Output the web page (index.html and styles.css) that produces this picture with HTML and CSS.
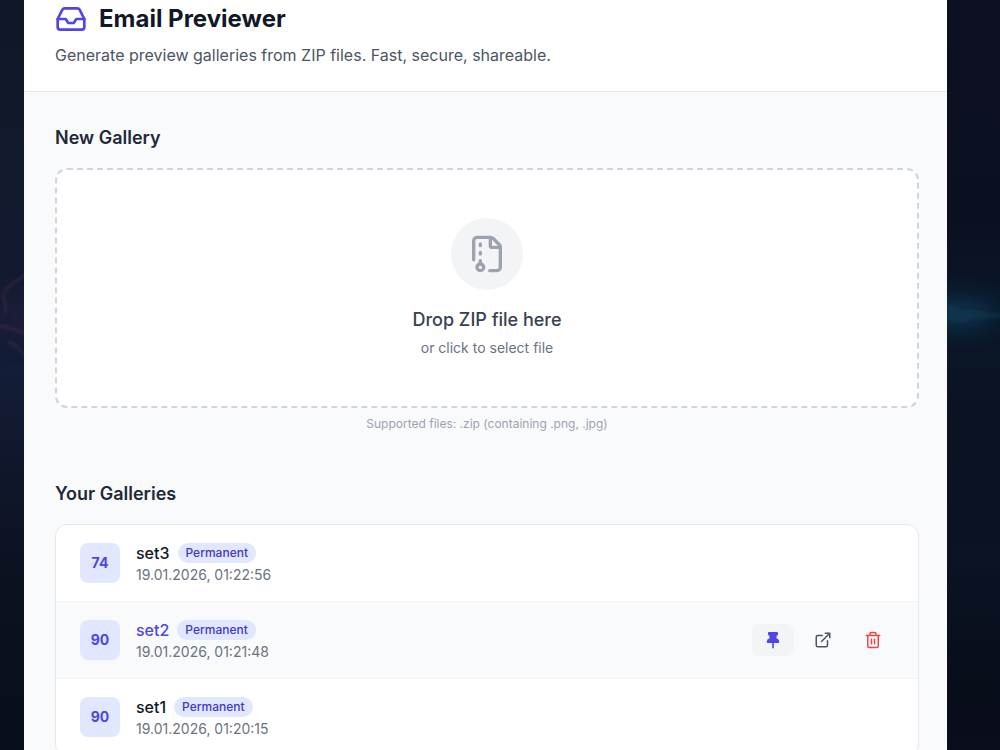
FILE: index.html
```html
<!DOCTYPE html>
<html lang="en">
<head>
<meta charset="utf-8">
<title>Email Previewer</title>
<link rel="stylesheet" href="styles.css">
</head>
<body>
<svg class="backdrop" viewBox="0 0 1000 750" aria-hidden="true">
  <defs>
    <filter id="soft" x="-50%" y="-50%" width="200%" height="200%"><feGaussianBlur stdDeviation="1.5"/></filter>
    <filter id="haze" x="-50%" y="-100%" width="200%" height="300%"><feGaussianBlur stdDeviation="12"/></filter>
  </defs>
  <ellipse cx="14" cy="316" rx="12" ry="26" fill="#3a2444" opacity=".35" filter="url(#haze)"/>
  <g fill="none" stroke="#5b3159" stroke-width="2.5" opacity=".4" filter="url(#soft)">
    <path d="M26 274L12 284Q2 292 3 297Q7 306 5 313M-2 326Q12 327 26 334M8 341Q18 346 26 357"/>
  </g>
  <ellipse cx="955" cy="313" rx="42" ry="16" fill="#0c4361" opacity=".6" filter="url(#haze)"/>
  <path d="M947 303Q960 311 972 310Q985 313 1002 313L1002 318Q980 317 962 323L947 321Z" fill="#12506b" opacity=".25" filter="url(#soft)"/>
</svg>
<div class="panel">
  <header class="header">
    <div class="brand">
      <svg class="brand-icon line" viewBox="0 0 24 24"><path d="M22 12h-6l-2 3h-4l-2-3H2"/><path d="M5.45 5.11 2 12v6a2 2 0 0 0 2 2h16a2 2 0 0 0 2-2v-6l-3.45-6.89A2 2 0 0 0 16.76 4H7.24a2 2 0 0 0-1.79 1.11z"/></svg>
      <h1>Email Previewer</h1>
    </div>
    <p class="tagline">Generate preview galleries from ZIP files. Fast, secure, shareable.</p>
  </header>
  <main class="main">
    <section class="section">
      <h2>New Gallery</h2>
      <div class="dropzone">
        <div class="drop-icon"><svg class="line" viewBox="0 0 24 24"><path d="M13.659 22H18a2 2 0 0 0 2-2V8a2.4 2.4 0 0 0-.706-1.706l-3.588-3.588A2.4 2.4 0 0 0 14 2H6a2 2 0 0 0-2 2v11.5"/><path d="M14 2v5a1 1 0 0 0 1 1h5M8 12v-1M8 18v-2M8 7V6"/><circle cx="8" cy="20" r="2"/></svg></div>
        <p class="drop-title">Drop ZIP file here</p>
        <p class="drop-sub">or click to select file</p>
      </div>
      <p class="hint">Supported files: .zip (containing .png, .jpg)</p>
    </section>
    <section class="section">
      <h2>Your Galleries</h2>
      <ul class="list">
        <li class="item">
          <div class="count">74</div>
          <div><div class="name-row"><span class="name">set3</span><span class="badge">Permanent</span></div><div class="date">19.01.2026, 01:22:56</div></div>
        </li>
        <li class="item active">
          <div class="count">90</div>
          <div><div class="name-row"><span class="name">set2</span><span class="badge">Permanent</span></div><div class="date">19.01.2026, 01:21:48</div></div>
          <div class="actions">
            <button class="action pinned" aria-label="Unpin"><svg viewBox="0 0 18 18"><path d="M4.9 1Q4 1 4 1.9V3.5Q4 4.4 4.9 4.5H5.4V7.2Q2.8 8.1 2.8 10.3V11.2Q2.8 12 3.6 12H8.2V17.3H9.8V12H14.4Q15.2 12 15.2 11.2V10.3Q15.2 8.1 12.6 7.2V4.5H13.1Q14 4.4 14 3.5V1.9Q14 1 13.1 1Z"/></svg></button>
            <button class="action" aria-label="Open"><svg class="line" viewBox="0 0 24 24"><path d="M15 3h6v6M10 14 21 3M18 13v6a2 2 0 0 1-2 2H5a2 2 0 0 1-2-2V8a2 2 0 0 1 2-2h6"/></svg></button>
            <button class="action remove" aria-label="Delete"><svg class="line" viewBox="0 0 24 24"><path d="M3 6h18M19 6v14a2 2 0 0 1-2 2H7a2 2 0 0 1-2-2V6M8 6V4a2 2 0 0 1 2-2h4a2 2 0 0 1 2 2v2M10 11v6M14 11v6"/></svg></button>
          </div>
        </li>
        <li class="item">
          <div class="count">90</div>
          <div><div class="name-row"><span class="name">set1</span><span class="badge">Permanent</span></div><div class="date">19.01.2026, 01:20:15</div></div>
        </li>
      </ul>
    </section>
  </main>
</div>
</body>
</html>
```
FILE: styles.css
```css
* { box-sizing: border-box; margin: 0; padding: 0; }
body {
  height: 750px;
  overflow: hidden;
  font-family: Inter, sans-serif;
  background:
    linear-gradient(#101827, #121a30 35%, #131d37 50%, #10172b 62%, #0b111f 78%, #090e1c) 0 0 / 24px 750px no-repeat,
    linear-gradient(#0c1020, #0b1020 30%, #0b182a 42%, #0b1222 56%, #0b1324 75%, #080e1b 88%, #0a0d1b);
}
.backdrop { position: absolute; inset: 0; width: 1000px; height: 750px; }
.panel { position: relative; width: 923px; height: 750px; margin-left: 24px; overflow: hidden; background: #f9fafc; }
.line { fill: none; stroke: currentColor; stroke-width: 2; stroke-linecap: round; stroke-linejoin: round; }
.header { height: 92px; padding: 3px 31px 0; background: #fff; border-bottom: 1px solid #e5e7eb; }
.brand { display: flex; align-items: center; gap: 12px; }
.brand-icon { width: 32px; height: 32px; color: #4f46e5; }
h1 { font-size: 24px; line-height: 32px; font-weight: 700; color: #111827; }
.tagline { margin-top: 8px; font-size: 16px; line-height: 24px; color: #4b5563; }
.main { padding: 32px 28px 0 31px; }
.section + .section { margin-top: 48px; }
h2 { margin-bottom: 16px; font-size: 18px; line-height: 28px; font-weight: 600; color: #1f2937; }
.dropzone { display: flex; flex-direction: column; align-items: center; padding: 48px; background: #fff; border: 2px dashed #d1d5db; border-radius: 12px; }
.drop-icon { display: flex; padding: 16px; margin-bottom: 16px; border-radius: 50%; background: #f3f4f6; color: #9ca3af; }
.drop-icon svg { width: 40px; height: 40px; }
.drop-title { font-size: 18px; line-height: 28px; font-weight: 500; color: #374151; }
.drop-sub { margin-top: 4px; font-size: 14px; line-height: 20px; color: #6b7280; }
.hint { margin-top: 8px; font-size: 12px; line-height: 16px; text-align: center; color: #9ca3af; }
.list { list-style: none; overflow: hidden; background: #fff; border: 1px solid #e5e7eb; border-radius: 12px; }
.item { display: flex; align-items: center; gap: 16px; padding: 16px 24px; }
.item + .item { border-top: 1px solid #f3f4f6; }
.item.active { background: #f9fafb; }
.count { display: flex; align-items: center; justify-content: center; width: 40px; height: 40px; border-radius: 8px; background: #e0e7ff; color: #4f46e5; font-size: 14px; line-height: 20px; font-weight: 700; }
.name-row { display: flex; align-items: center; gap: 8px; height: 24px; }
.name { font-size: 16px; line-height: 24px; font-weight: 500; color: #111827; }
.active .name { color: #4f46e5; }
.badge { padding: 2px 8px; border-radius: 10px; background: #e0e7ff; color: #4338ca; font-size: 12px; line-height: 16px; font-weight: 500; }
.date { font-size: 14px; line-height: 20px; color: #6b7280; }
.actions { display: flex; gap: 8px; margin-left: auto; }
.action { display: flex; align-items: center; justify-content: center; width: 42px; height: 32px; border: 0; border-radius: 8px; background: none; color: #4b5563; }
.action svg { width: 18px; height: 18px; }
.pinned { background: #f3f4f6; color: #4f46e5; }
.pinned svg { fill: currentColor; }
.remove { color: #ef4444; }
```
